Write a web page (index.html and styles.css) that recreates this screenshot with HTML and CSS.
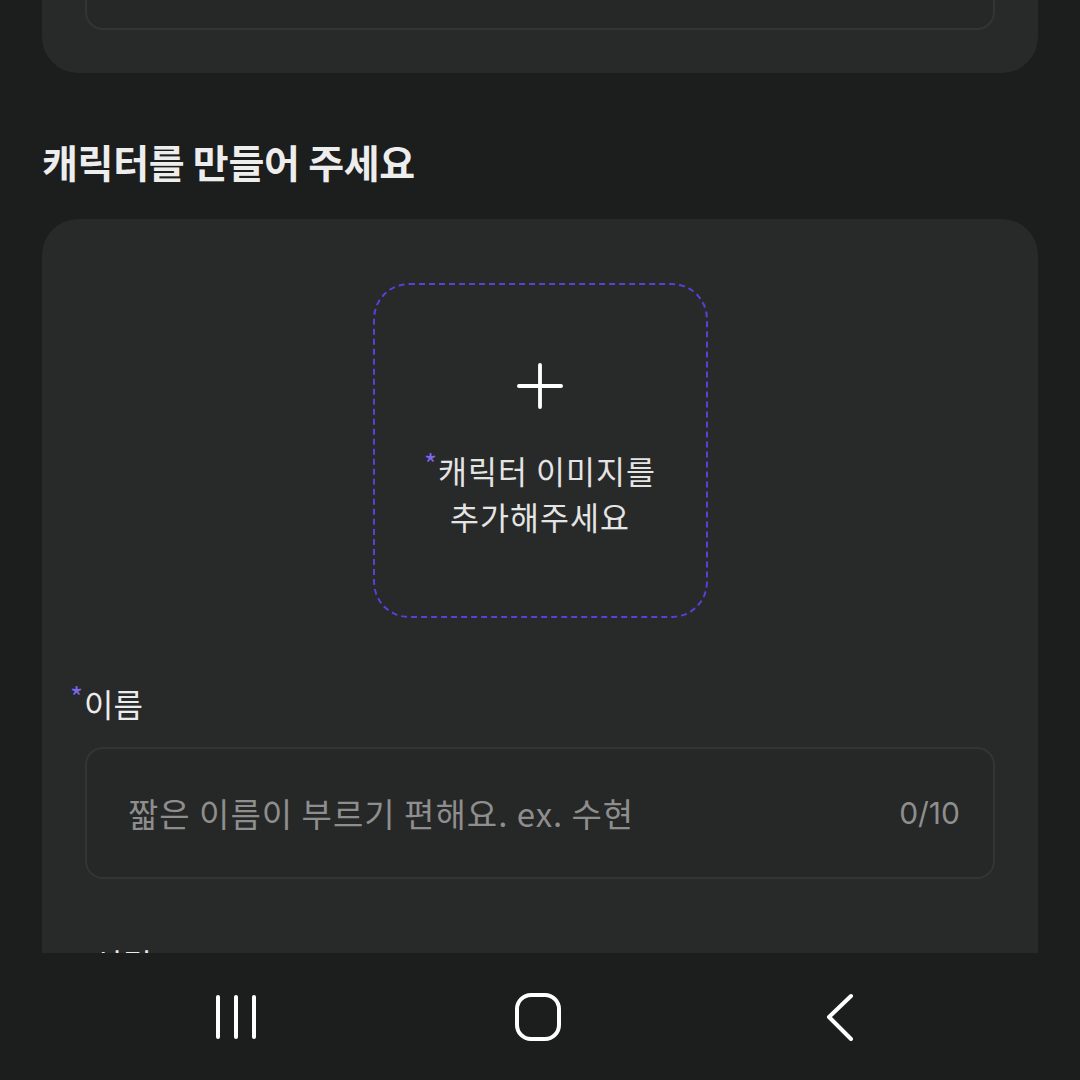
FILE: index.html
```html
<!DOCTYPE html>
<html>

<head>
    <meta name="viewport" content="width=device-width, initial-scale=1.0">
    <title>캐릭터 만들기</title>
    <link rel="stylesheet" href="styles.css">
</head>

<body>
    <div class="content">
        <div class="card card-top">
            <div class="field"></div>
        </div>

        <h2 class="section-title">캐릭터를 만들어 주세요</h2>

        <div class="card card-form">
            <div class="upload-box">
                <svg class="plus" width="48" height="48" viewBox="0 0 48 48">
                    <path d="M24 2 V46 M2 24 H46" stroke="#fff" stroke-width="4" stroke-linecap="round" fill="none" />
                </svg>
                <p class="upload-text"><span class="req">*</span>캐릭터 이미지를<br>추가해주세요</p>
            </div>

            <label class="label"><span class="req">*</span>이름</label>
            <div class="field field-input">
                <span class="placeholder">짧은 이름이 부르기 편해요. ex. 수현</span>
                <span class="counter">0/10</span>
            </div>

            <label class="label label-plain">성격</label>
        </div>
    </div>

    <!-- android navigation bar -->
    <div class="navbar">
        <svg width="48" height="48" viewBox="0 0 48 48">
            <path d="M6 4 V44 M24 4 V44 M42 4 V44" stroke="#fff" stroke-width="4" stroke-linecap="round" fill="none" />
        </svg>
        <svg width="48" height="48" viewBox="0 0 48 48">
            <rect x="3" y="2" width="42" height="44" rx="14" stroke="#fff" stroke-width="4" fill="none" />
        </svg>
        <svg width="48" height="48" viewBox="0 0 48 48">
            <path d="M35 3 L13 24 L35 46" stroke="#fff" stroke-width="4" stroke-linecap="round" stroke-linejoin="round" fill="none" />
        </svg>
    </div>
</body>

</html>
```

FILE: styles.css
```css
body {
    margin: 0;
    padding: 0;
    background-color: #1c1d1d;
    color: #e8e8e8;
    font-family: "Noto Sans CJK KR", "Noto Sans", sans-serif;
    height: 1080px;
    overflow: hidden;
}

/* page is scrolled, so the first card is partly off screen */
.content {
    margin-top: -145px;
    padding: 0 42px;
}

.card {
    background-color: #282929;
    border-radius: 36px;
    padding: 0 43px;
}

.card-top {
    padding-top: 43px;
    padding-bottom: 43px;
}

.field {
    height: 128px;
    border: 2px solid #333434;
    border-radius: 18px;
    background-color: #262727;
}

.section-title {
    margin: 61px 0 31px 0;
    font-size: 39px;
    line-height: 54px;
    font-weight: 700;
    letter-spacing: -0.3px;
    color: #ededed;
}

.card-form {
    padding-top: 64px;
    padding-bottom: 40px;
}

.upload-box {
    width: 331px;
    height: 331px;
    margin: 0 auto;
    border: 2px dashed #5b3fdc;
    border-radius: 36px;
    display: flex;
    flex-direction: column;
    align-items: center;
    justify-content: center;
    gap: 38px;
    box-sizing: content-box;
}

.plus {
    display: block;
    width: 46px;
    height: 46px;
}

.upload-text {
    margin: 0;
    text-align: center;
    font-size: 31.5px;
    line-height: 46px;
    letter-spacing: 1px;
    color: #e4e4e4;
}

.req {
    color: #7b68ee;
    font-size: 28px;
    line-height: 0;
    vertical-align: 9px;
    margin-right: 1px;
    letter-spacing: 0;
}

.label {
    display: block;
    margin: 63px 0 22px -15px;
    font-size: 32px;
    line-height: 44px;
    color: #ececec;
}

.label-plain {
    margin: 62px 0 0 8px;
}

.field-input {
    display: flex;
    align-items: center;
    justify-content: space-between;
    padding: 0 33px 0 41px;
    font-size: 33px;
    letter-spacing: 1px;
    color: #8e8e8e;
}

.counter {
    letter-spacing: 0;
    font-family: "Inter", "Noto Sans", sans-serif;
    font-size: 30px;
    color: #8e8e8e;
}

.navbar {
    position: fixed;
    left: 0;
    right: 0;
    bottom: 0;
    height: 127px;
    background-color: #1c1d1d;
    display: flex;
    justify-content: space-between;
    align-items: center;
    padding: 0 216px 0 212px;
}

.navbar svg {
    display: block;
}
```
